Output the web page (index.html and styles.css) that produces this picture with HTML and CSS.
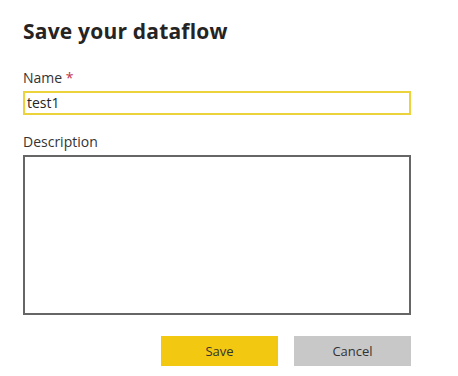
FILE: index.html
```html
<!DOCTYPE html>
<html>
<head>
<meta charset="utf-8">
<link rel="stylesheet" href="styles.css">
</head>
<body>
<div class="dialog">
  <h1 class="title">Save your dataflow</h1>
  <label class="label">Name <span class="req">*</span></label>
  <div class="input">test1</div>
  <label class="label desc-label">Description</label>
  <div class="textarea"></div>
  <div class="actions">
    <button class="btn btn-save">Save</button>
    <button class="btn btn-cancel">Cancel</button>
  </div>
</div>
</body>
</html>
```
FILE: styles.css
```css
html, body {
  margin: 0;
  padding: 0;
  background: #ffffff;
}
.dialog {
  width: 388px;
  padding: 17px 0 0 23px;
  font-family: "Open Sans", "Noto Sans", sans-serif;
  color: #252423;
}
.title {
  margin: 0;
  font-size: 21px;
  font-weight: 700;
  line-height: 29px;
  letter-spacing: 0.2px;
}
.label {
  display: block;
  font-size: 14px;
  line-height: 20px;
  margin-top: 22px;
  color: #333333;
}
.req {
  color: #c4314b;
}
.input {
  box-sizing: border-box;
  margin-top: 3px;
  height: 24px;
  border: 2px solid #ecd23b;
  padding: 0 2px;
  font-size: 14px;
  line-height: 20px;
  color: #252423;
}
.desc-label {
  margin-top: 17px;
}
.textarea {
  box-sizing: border-box;
  margin-top: 3px;
  height: 160px;
  border: 2px solid #666666;
}
.actions {
  display: flex;
  justify-content: flex-end;
  gap: 16px;
  margin-top: 21px;
}
.btn {
  width: 117px;
  height: 30px;
  border: none;
  padding: 0;
  font-family: "Open Sans", "Noto Sans", sans-serif;
  font-size: 13px;
  color: #333333;
}
.btn-save {
  background: #f2c811;
}
.btn-cancel {
  background: #c8c8c8;
}
```
